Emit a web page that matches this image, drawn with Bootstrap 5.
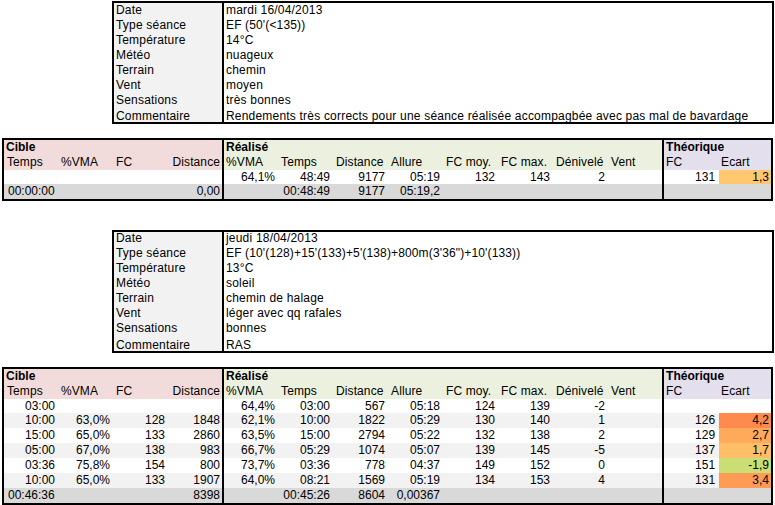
<!DOCTYPE html>
<html lang="fr"><head><meta charset="utf-8"><title>Séances</title>
<link rel="stylesheet" href="https://cdn.jsdelivr.net/npm/bootstrap@5.3.0/dist/css/bootstrap.min.css">
<style>
body{background:#fff;color:#000;font-family:"Liberation Sans",Arial,sans-serif;font-size:12px;line-height:15px;margin:0;overflow:hidden}
.sheet{padding-top:1px}
table.infobox,table.datagrid{table-layout:fixed;border-collapse:separate;border-spacing:0}
table.infobox{width:662px;margin:0 0 14px 112px;border:2px solid #000}
table.datagrid{width:771px;margin:0 0 29px 2px;border:2px solid #000}
table.datagrid:last-child{margin-bottom:0}
.infobox td{height:15px;line-height:13px;padding:0 0 2px 2px;white-space:nowrap;overflow:hidden;letter-spacing:.2px}
.infobox.lowered td{line-height:15px;padding:0 0 0 2px}
.infobox tr:last-child td,.infobox.lowered tr:last-child td{height:14px;line-height:12px;padding:2px 0 0 2px}
.infobox .lab{background:#f2f2f2;border-right:2px solid #000;width:110px}
.infobox .seq{letter-spacing:.14px}
.datagrid col{width:55px}
.datagrid col:last-child{width:auto}
.datagrid td{height:15px;padding:0 2px;white-space:nowrap;overflow:hidden}
.datagrid tr:nth-child(3) td{height:14px;line-height:14px}
.datagrid .divide{border-right:2px solid #000}
.datagrid .text-end{padding-right:4px}
.datagrid .text-end.edge{padding-right:2px}
.datagrid .hdr td{letter-spacing:.1px}
.datagrid .t0{padding-left:3px}
.datagrid .hms{padding-left:4px}
.pk{background:#f2dcdb}.gn{background:#ebf1de}.vt{background:#e4dfec}
.tot td{background:#d9d9d9}
.alt td{background:#f2f2f2}
.datagrid .e1{background:#ffc86f}.datagrid .e2{background:#ff8a4d}.datagrid .e3{background:#ffa95b}.datagrid .e4{background:#ffbf69}.datagrid .e5{background:#cbde73}.datagrid .e6{background:#ff9b55}
</style></head><body>
<div class="sheet">
<table class="infobox lowered"><tbody>
<tr><td class="lab">Date</td><td>mardi 16/04/2013</td></tr>
<tr><td class="lab">Type séance</td><td class="seq">EF (50'(&lt;135))</td></tr>
<tr><td class="lab">Température</td><td>14°C</td></tr>
<tr><td class="lab">Météo</td><td>nuageux</td></tr>
<tr><td class="lab">Terrain</td><td>chemin</td></tr>
<tr><td class="lab">Vent</td><td>moyen</td></tr>
<tr><td class="lab">Sensations</td><td>très bonnes</td></tr>
<tr><td class="lab">Commentaire</td><td>Rendements très corrects pour une séance réalisée accompagbée avec pas mal de bavardage</td></tr>
</tbody></table>
<table class="datagrid">
<colgroup><col><col><col><col><col><col><col><col><col><col><col><col><col><col></colgroup>
<tbody>
<tr><td class="pk fw-bold divide" colspan="4">Cible</td><td class="gn fw-bold divide" colspan="8">Réalisé</td><td class="vt fw-bold" colspan="2">Théorique</td></tr>
<tr class="hdr"><td class="pk t0">Temps</td><td class="pk">%VMA</td><td class="pk">FC</td><td class="pk text-end edge divide">Distance</td><td class="gn">%VMA</td><td class="gn">Temps</td><td class="gn">Distance</td><td class="gn">Allure</td><td class="gn">FC moy.</td><td class="gn">FC max.</td><td class="gn">Dénivelé</td><td class="gn divide">Vent</td><td class="vt">FC</td><td class="vt">Ecart</td></tr>
<tr><td></td><td></td><td></td><td class="divide"></td><td class="text-end">64,1%</td><td class="text-end">48:49</td><td class="text-end">9177</td><td class="text-end">05:19</td><td class="text-end">132</td><td class="text-end">143</td><td class="text-end">2</td><td class="divide"></td><td class="text-end">131</td><td class="text-end edge e1">1,3</td></tr>
<tr class="tot"><td class="hms">00:00:00</td><td></td><td></td><td class="text-end edge divide">0,00</td><td></td><td class="text-end">00:48:49</td><td class="text-end">9177</td><td class="text-end">05:19,2</td><td></td><td></td><td></td><td class="divide"></td><td></td><td></td></tr>
</tbody></table>
<table class="infobox"><tbody>
<tr><td class="lab">Date</td><td>jeudi 18/04/2013</td></tr>
<tr><td class="lab">Type séance</td><td class="seq">EF (10'(128)+15'(133)+5'(138)+800m(3'36")+10'(133))</td></tr>
<tr><td class="lab">Température</td><td>13°C</td></tr>
<tr><td class="lab">Météo</td><td>soleil</td></tr>
<tr><td class="lab">Terrain</td><td>chemin de halage</td></tr>
<tr><td class="lab">Vent</td><td>léger avec qq rafales</td></tr>
<tr><td class="lab">Sensations</td><td>bonnes</td></tr>
<tr><td class="lab">Commentaire</td><td>RAS</td></tr>
</tbody></table>
<table class="datagrid">
<colgroup><col><col><col><col><col><col><col><col><col><col><col><col><col><col></colgroup>
<tbody>
<tr><td class="pk fw-bold divide" colspan="4">Cible</td><td class="gn fw-bold divide" colspan="8">Réalisé</td><td class="vt fw-bold" colspan="2">Théorique</td></tr>
<tr class="hdr"><td class="pk t0">Temps</td><td class="pk">%VMA</td><td class="pk">FC</td><td class="pk text-end edge divide">Distance</td><td class="gn">%VMA</td><td class="gn">Temps</td><td class="gn">Distance</td><td class="gn">Allure</td><td class="gn">FC moy.</td><td class="gn">FC max.</td><td class="gn">Dénivelé</td><td class="gn divide">Vent</td><td class="vt">FC</td><td class="vt">Ecart</td></tr>
<tr><td class="text-end">03:00</td><td></td><td></td><td class="divide"></td><td class="text-end">64,4%</td><td class="text-end">03:00</td><td class="text-end">567</td><td class="text-end">05:18</td><td class="text-end">124</td><td class="text-end">139</td><td class="text-end">-2</td><td class="divide"></td><td></td><td></td></tr>
<tr class="alt"><td class="text-end">10:00</td><td class="text-end">63,0%</td><td class="text-end">128</td><td class="text-end edge divide">1848</td><td class="text-end">62,1%</td><td class="text-end">10:00</td><td class="text-end">1822</td><td class="text-end">05:29</td><td class="text-end">130</td><td class="text-end">140</td><td class="text-end">1</td><td class="divide"></td><td class="text-end">126</td><td class="text-end edge e2">4,2</td></tr>
<tr><td class="text-end">15:00</td><td class="text-end">65,0%</td><td class="text-end">133</td><td class="text-end edge divide">2860</td><td class="text-end">63,5%</td><td class="text-end">15:00</td><td class="text-end">2794</td><td class="text-end">05:22</td><td class="text-end">132</td><td class="text-end">138</td><td class="text-end">2</td><td class="divide"></td><td class="text-end">129</td><td class="text-end edge e3">2,7</td></tr>
<tr class="alt"><td class="text-end">05:00</td><td class="text-end">67,0%</td><td class="text-end">138</td><td class="text-end edge divide">983</td><td class="text-end">66,7%</td><td class="text-end">05:29</td><td class="text-end">1074</td><td class="text-end">05:07</td><td class="text-end">139</td><td class="text-end">145</td><td class="text-end">-5</td><td class="divide"></td><td class="text-end">137</td><td class="text-end edge e4">1,7</td></tr>
<tr><td class="text-end">03:36</td><td class="text-end">75,8%</td><td class="text-end">154</td><td class="text-end edge divide">800</td><td class="text-end">73,7%</td><td class="text-end">03:36</td><td class="text-end">778</td><td class="text-end">04:37</td><td class="text-end">149</td><td class="text-end">152</td><td class="text-end">0</td><td class="divide"></td><td class="text-end">151</td><td class="text-end edge e5">-1,9</td></tr>
<tr class="alt"><td class="text-end">10:00</td><td class="text-end">65,0%</td><td class="text-end">133</td><td class="text-end edge divide">1907</td><td class="text-end">64,0%</td><td class="text-end">08:21</td><td class="text-end">1569</td><td class="text-end">05:19</td><td class="text-end">134</td><td class="text-end">153</td><td class="text-end">4</td><td class="divide"></td><td class="text-end">131</td><td class="text-end edge e6">3,4</td></tr>
<tr class="tot"><td class="hms">00:46:36</td><td></td><td></td><td class="text-end edge divide">8398</td><td></td><td class="text-end">00:45:26</td><td class="text-end">8604</td><td class="text-end">0,00367</td><td></td><td></td><td></td><td class="divide"></td><td></td><td></td></tr>
</tbody></table>
</div>
<script src="https://cdn.jsdelivr.net/npm/bootstrap@5.3.0/dist/js/bootstrap.bundle.min.js"></script>
</body></html>
